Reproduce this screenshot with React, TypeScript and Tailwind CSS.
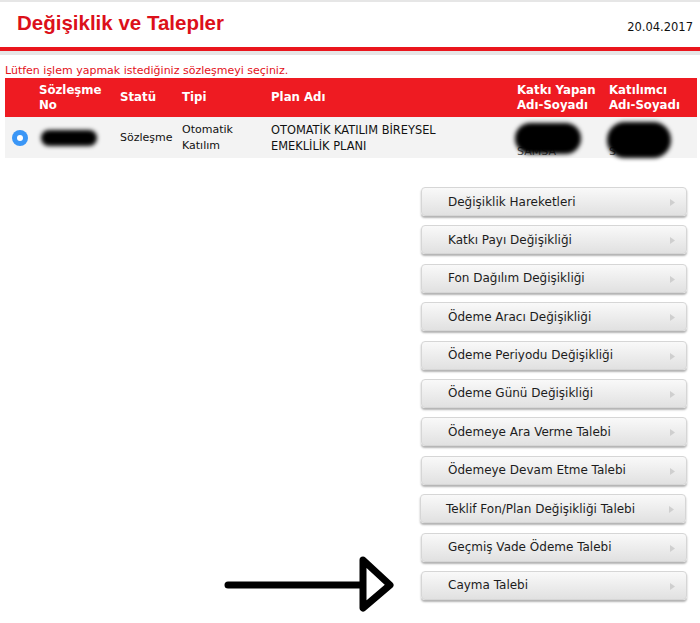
import React from 'react';

const buttons = [
  'Değişiklik Hareketleri',
  'Katkı Payı Değişikliği',
  'Fon Dağılım Değişikliği',
  'Ödeme Aracı Değişikliği',
  'Ödeme Periyodu Değişikliği',
  'Ödeme Günü Değişikliği',
  'Ödemeye Ara Verme Talebi',
  'Ödemeye Devam Etme Talebi',
  'Teklif Fon/Plan Değişikliği Talebi',
  'Geçmiş Vade Ödeme Talebi',
  'Cayma Talebi',
];

const cols = 'grid grid-cols-[30px_81px_62px_89px_246px_92px_92px]';

function Blob({ className }: { className: string }) {
  return <div className={`absolute rounded-full bg-black blur-[2px] ${className}`} />;
}

function MenuButton({ label, shift }: { label: string; shift?: boolean }) {
  return (
    <button
      className={`relative flex h-[29px] w-[266px] items-center rounded-[4px] border border-[#d6d6d6] bg-gradient-to-b from-[#f9f9f9] to-[#e1e1e1] text-left text-[12px] leading-[14px] text-[#1c1c1c] shadow-[0_2px_2px_rgba(0,0,0,0.3)] ${
        shift ? 'ml-[-1px] pl-[25px]' : 'pl-[26px]'
      }`}
    >
      <span>{label}</span>
      <svg className="absolute right-[11px] top-[11px]" width="5" height="7" viewBox="0 0 5 7">
        <path d="M0 0 L5 3.5 L0 7 Z" fill="#cfcfcf" />
      </svg>
    </button>
  );
}

export default function App() {
  return (
    <div className="relative h-[623px] w-[700px] overflow-hidden bg-white font-['DejaVu_Sans',sans-serif] text-[#111]">
      <div className="flex h-[47px] justify-between border-t-2 border-[#e6e6e6]">
        <h1 className="ml-[17px] mt-[9px] font-['Liberation_Sans',Arial,sans-serif] text-[20.5px] font-bold leading-[24px] text-[#dc101a]">
          Değişiklik ve Talepler
        </h1>
        <div className="mr-[7px] mt-[18px] text-[11.5px] leading-[14px] text-[#111]">20.04.2017</div>
      </div>
      <div className="h-[4px] bg-[#ea161d]" />
      <div className="h-[4px] bg-[#e6e6e6]" />

      <p className="ml-[5px] mt-[9px] text-[11px] leading-[13px] text-[#e3111a]">
        Lütfen işlem yapmak istediğiniz sözleşmeyi seçiniz.
      </p>

      <div className="ml-[5px] mt-[1px] w-[692px]">
        <div className={`${cols} h-[39px] items-center bg-[#ee1b22] text-[11.75px] font-bold leading-[15px] text-white`}>
          <div />
          <div className="pl-[4px]">
            Sözleşme
            <br />
            No
          </div>
          <div className="pl-[4px]">Statü</div>
          <div className="pl-[4px]">Tipi</div>
          <div className="pl-[4px]">Plan Adı</div>
          <div className="pl-[4px]">
            Katkı Yapan
            <br />
            Adı-Soyadı
          </div>
          <div className="pl-[4px]">
            Katılımcı
            <br />
            Adı-Soyadı
          </div>
        </div>
        <div className={`${cols} h-[41px] items-center bg-[#f3f3f3] text-[11px] leading-[16px] text-[#111]`}>
          <div className="flex pl-[7px]">
            <span className="flex h-[16px] w-[16px] items-center justify-center rounded-full bg-[#3a96f6]">
              <span className="h-[6px] w-[6px] rounded-full bg-white" />
            </span>
          </div>
          <div className="relative h-full">
            <Blob className="left-[6px] top-[13px] h-[16px] w-[56px]" />
          </div>
          <div className="pl-[4px]">Sözleşme</div>
          <div className="pl-[4px]">
            Otomatik
            <br />
            Katılım
          </div>
          <div className="pl-[4px] text-[11.4px]">
            OTOMATİK KATILIM BİREYSEL
            <br />
            EMEKLİLİK PLANI
          </div>
          <div className="relative h-full">
            <span className="absolute left-[4px] top-[27px] text-[#555]">SAMSA</span>
            <Blob className="left-[2px] top-[6px] h-[31px] w-[66px]" />
          </div>
          <div className="relative h-full">
            <span className="absolute left-[4px] top-[27px] text-[#555]">S</span>
            <Blob className="left-[2px] top-[5px] h-[36px] w-[64px]" />
          </div>
        </div>
      </div>

      <div className="ml-[421px] mt-[29px] flex flex-col gap-[9.4px]">
        {buttons.map((b, i) => (
          <MenuButton key={b} label={b} shift={i === 8} />
        ))}
      </div>

      <svg className="absolute left-[220px] top-[550px]" width="180" height="66" viewBox="0 0 180 66">
        <line x1="8" y1="35" x2="142" y2="35" stroke="#000" strokeWidth="7" strokeLinecap="round" />
        <path
          d="M143 10 L170 35 L143 58 Z"
          fill="none"
          stroke="#000"
          strokeWidth="7"
          strokeLinejoin="round"
        />
      </svg>
    </div>
  );
}
